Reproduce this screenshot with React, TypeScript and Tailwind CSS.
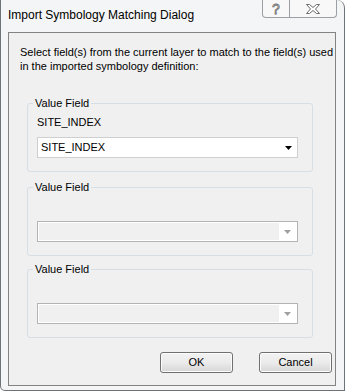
import React from "react";

const ui = { fontFamily: '"Liberation Sans", Arial, sans-serif' };

const ValueGroup = ({
  label,
  value,
  disabled,
}: {
  label: string;
  value?: string;
  disabled?: boolean;
}) => {
  return (
    <fieldset className="ml-[18px] w-[286px] rounded-[3px] border border-[#d5dfe5] pb-[13px] pl-[9px]">
      <legend className="-ml-[4px] px-[2px] text-[11px] leading-[13px] text-black">{label}</legend>
      {value ? (
        <div className="mt-[6px] h-[13px] text-[11px] leading-[13px] text-black">{value}</div>
      ) : (
        <div className="mt-[6px] h-[13px]" />
      )}
      {disabled ? (
        <div className="mt-[8px] flex h-[21px] w-[261px] border border-[#b4b4b4] bg-white p-[1px]">
          <div className="flex-1 bg-[#f0f0f0]" />
          <div className="flex w-[17px] items-center justify-center">
            <svg width="7" height="4" viewBox="0 0 7 4">
              <path d="M0 0h7L3.5 4z" fill="#a0a0a0" />
            </svg>
          </div>
        </div>
      ) : (
        <div className="mt-[8px] flex h-[21px] w-[261px] items-center border border-[#cfcfcf] bg-white pl-[3px] pr-[5px]">
          <span className="flex-1 text-[11px] leading-[13px] text-black">{value}</span>
          <svg width="7" height="4" viewBox="0 0 7 4">
            <path d="M0 0h7L3.5 4z" fill="#000" />
          </svg>
        </div>
      )}
    </fieldset>
  );
};

const DialogButton = ({ children }: { children: React.ReactNode }) => (
  <button className="h-[21px] w-[73px] rounded-[3px] border border-[#707070] bg-gradient-to-b from-[#f2f2f2] via-[#ebebeb] to-[#d6d6d6] text-[11px] leading-[13px] text-black shadow-[inset_0_0_0_1px_#fcfcfc]">
    {children}
  </button>
);

export default function App() {
  return (
    <div className="h-[392px] w-[345px] bg-white" style={ui}>
      <div className="flex h-[391px] w-[345px] flex-col rounded-tr-[8px] rounded-bl-[5px] border-l border-b border-r border-[#6e7378] bg-[#f4f5f6]">
        <div className="flex h-[32px] items-start justify-between">
          <span className="ml-[7px] mt-[8px] text-[12px] leading-[14px] text-black">
            Import Symbology Matching Dialog
          </span>
          <div className="mr-[7px] flex h-[18px] overflow-hidden rounded-b-[4px] border border-t-0 border-[#9aa0a6] bg-[#f8f8f8]">
            <div className="flex w-[27px] items-center justify-center border-r border-[#9aa0a6]">
              <span className="text-[14px] leading-[14px] text-white [-webkit-text-stroke:0.8px_#6b6b6b]">?</span>
            </div>
            <div className="flex w-[46px] items-center justify-center">
              <svg width="14" height="10" viewBox="0 0 14 10">
                <path
                  d="M0.5 0.5h3l3.5 3 3.5-3h3L9.5 5l4 4.5h-3L7 6.5l-3.5 3h-3L4.5 5z"
                  fill="#fff"
                  stroke="#6b6b6b"
                  strokeWidth="1"
                  strokeLinejoin="round"
                />
              </svg>
            </div>
          </div>
        </div>
        <div className="ml-[7px] mr-[8px] flex h-[354px] flex-col border border-[#838383] bg-[#f0f0f0]">
          <p className="ml-[11px] mt-[12px] text-[11px] leading-[14px] text-black">
            Select field(s) from the current layer to match to the field(s) used
            <br />
            in the imported symbology definition:
          </p>
          <div className="mt-[24px]">
            <ValueGroup label="Value Field" value="SITE_INDEX" />
          </div>
          <div className="mt-[9px]">
            <ValueGroup label="Value Field" disabled />
          </div>
          <div className="mt-[7px]">
            <ValueGroup label="Value Field" disabled />
          </div>
          <div className="mr-[3px] mt-[14px] flex justify-end gap-[26px]">
            <DialogButton>OK</DialogButton>
            <DialogButton>Cancel</DialogButton>
          </div>
        </div>
      </div>
    </div>
  );
}
